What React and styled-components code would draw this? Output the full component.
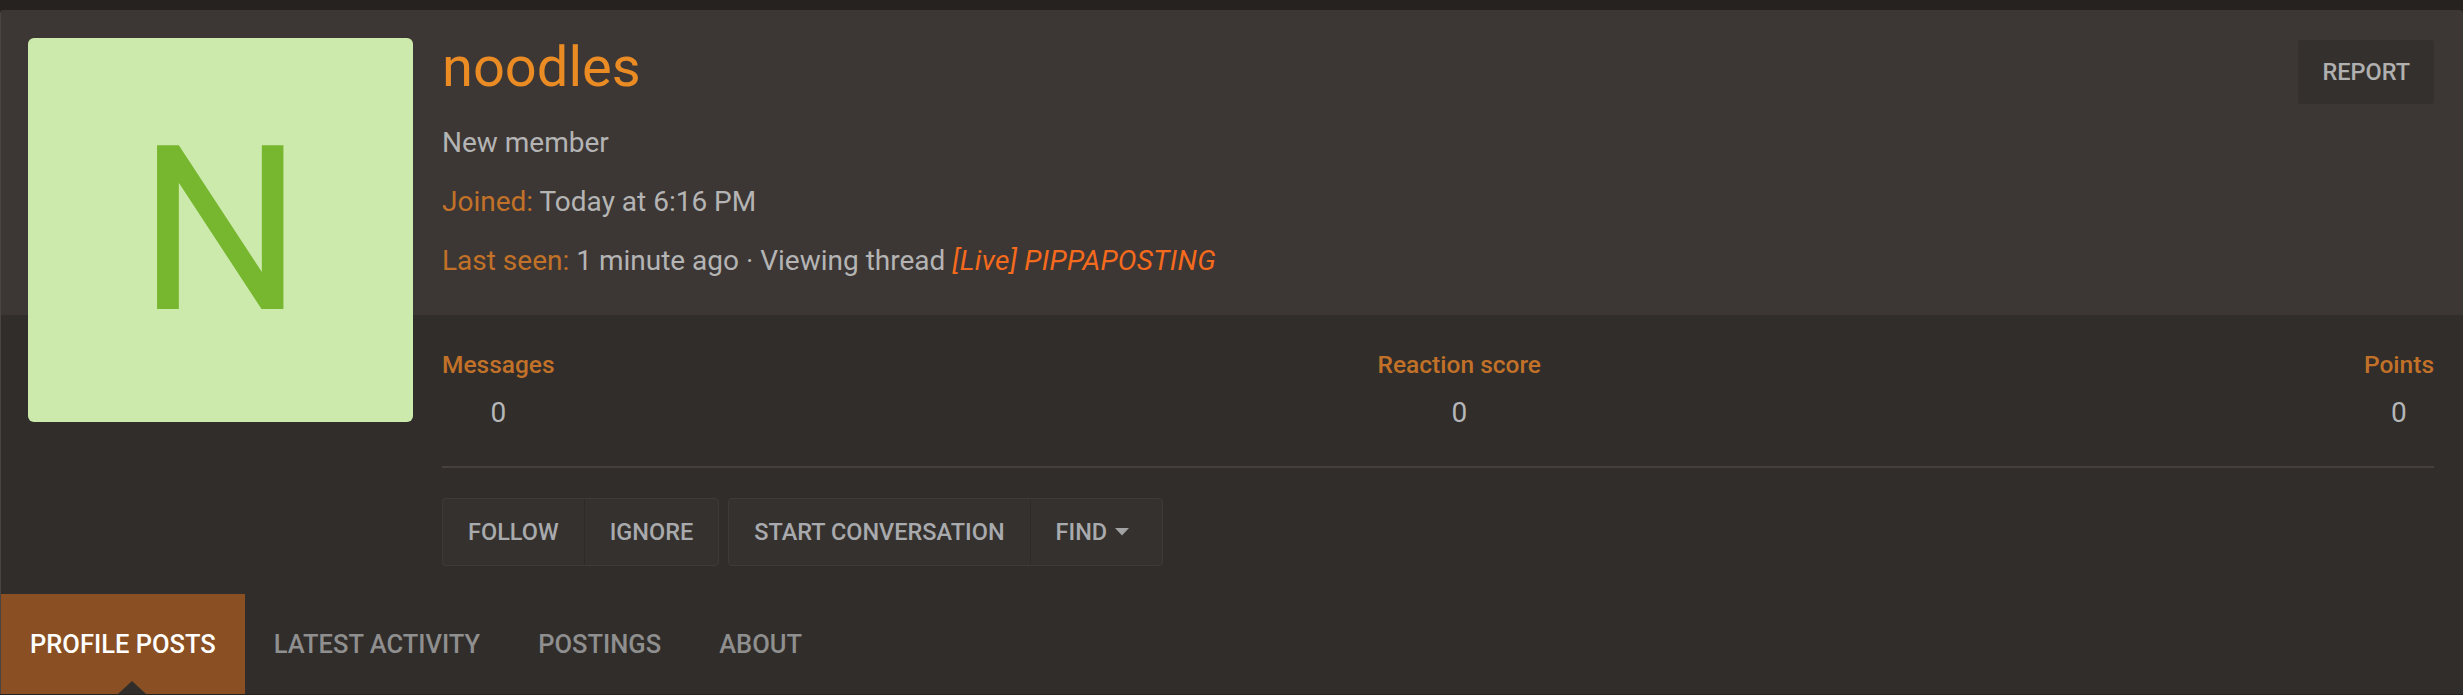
import styled, { createGlobalStyle } from 'styled-components'

const GlobalStyle = createGlobalStyle`
    html, body {
        margin: 0;
        padding: 0;
        background: #262220;
        font-family: Roboto, 'Liberation Sans', sans-serif;
    }
`

const stats = [
    { label: 'Messages', value: '0' },
    { label: 'Reaction score', value: '0' },
    { label: 'Points', value: '0' },
]

const tabs = ['Profile posts', 'Latest activity', 'Postings', 'About']

const Caret = () => (
    <svg width="14" height="8" viewBox="0 0 14 8">
        <path d="M0 0 L14 0 L7 7.5 Z" fill="#a3a3a3" />
    </svg>
)

const App = () => {
    return (
        <S.Page>
            <GlobalStyle />
            <S.Card>
                <S.Avatar>
                    <span>N</span>
                </S.Avatar>

                <S.Header>
                    <S.Info>
                        <S.Name>noodles</S.Name>
                        <S.Line>New member</S.Line>
                        <S.Line>
                            <S.Key>Joined:</S.Key> Today at 6:16 PM
                        </S.Line>
                        <S.Line>
                            <S.Key>Last seen:</S.Key> 1 minute ago · Viewing thread{' '}
                            <S.Thread>[Live] PIPPAPOSTING</S.Thread>
                        </S.Line>
                    </S.Info>
                    <S.Report>Report</S.Report>
                </S.Header>

                <S.Body>
                    <S.Stats>
                        {stats.map(s => (
                            <S.Stat key={s.label}>
                                <dt>{s.label}</dt>
                                <dd>{s.value}</dd>
                            </S.Stat>
                        ))}
                    </S.Stats>
                    <S.Divider />
                    <S.Actions>
                        <S.Group>
                            <S.Button>Follow</S.Button>
                            <S.Button>Ignore</S.Button>
                        </S.Group>
                        <S.Group>
                            <S.Button>Start conversation</S.Button>
                            <S.Button menu={1}>
                                Find <Caret />
                            </S.Button>
                        </S.Group>
                    </S.Actions>
                </S.Body>

                <S.Tabs>
                    {tabs.map((t, i) => (
                        <S.Tab key={t} active={i === 0 ? 1 : 0}>
                            {t}
                        </S.Tab>
                    ))}
                </S.Tabs>
            </S.Card>
        </S.Page>
    )
}

export default App

const S = {}

S.Page = styled.div`
    padding-top: 10px;
`

S.Card = styled.div`
    position: relative;
    background: #312d2a;
    border-left: 1px solid #4a4542;
    border-radius: 4px 4px 0 0;
    overflow: hidden;
`

S.Avatar = styled.div`
    position: absolute;
    left: 27px;
    top: 28px;
    width: 385px;
    height: 384px;
    border-radius: 6px;
    background: #cdeaad;
    display: flex;
    align-items: center;
    justify-content: center;
    span {
        color: #76b72f;
        font-size: 231px;
        line-height: 1;
        font-family: Roboto, 'Liberation Sans', sans-serif;
    }
`

S.Header = styled.div`
    background: #3c3734;
    display: flex;
    align-items: flex-start;
    padding: 24px 29px 0 441px;
    height: 305px;
    box-sizing: border-box;
`

S.Info = styled.div`
    flex: 1;
`

S.Name = styled.h1`
    margin: 0 0 21px;
    font-size: 56px;
    font-weight: 400;
    line-height: 1.2;
    color: #ea8b24;
`

S.Line = styled.div`
    font-size: 28px;
    line-height: 42px;
    color: #b4b4b4;
    & + & {
        margin-top: 17px;
    }
`

S.Key = styled.span`
    color: #c27128;
`

S.Thread = styled.span`
    color: #f56a1c;
    font-style: italic;
    letter-spacing: 0.3px;
`

S.Report = styled.button`
    margin-top: 6px;
    height: 64px;
    padding: 0 24px;
    border: none;
    border-radius: 3px;
    background: #34302d;
    color: #b0b0b0;
    font-family: Roboto, 'Liberation Sans', sans-serif;
    font-size: 23.5px;
    font-weight: 500;
    text-transform: uppercase;
`

S.Body = styled.div`
    padding: 34px 29px 28px 441px;
`

S.Stats = styled.dl`
    margin: 0;
    display: flex;
    justify-content: space-between;
`

S.Stat = styled.div`
    display: flex;
    flex-direction: column;
    align-items: center;
    dt {
        font-size: 24.5px;
        font-weight: 500;
        line-height: 32px;
        color: #c27128;
    }
    dd {
        margin: 12px 0 0;
        font-size: 28px;
        line-height: 39px;
        color: #b4b6b8;
    }
`

S.Divider = styled.div`
    height: 2px;
    background: #45403d;
    margin-top: 34px;
`

S.Actions = styled.div`
    display: flex;
    gap: 9px;
    margin-top: 30px;
`

S.Group = styled.div`
    display: flex;
    border: 1px solid #3e3a37;
    border-radius: 4px;
    background: #35312e;
    overflow: hidden;
`

S.Button = styled.div`
    height: 66px;
    display: flex;
    align-items: center;
    gap: 8px;
    padding: 0 ${p => (p.menu ? '33px' : '25px')} 0 25px;
    font-size: 23.5px;
    font-weight: 500;
    color: #a8aaad;
    text-transform: uppercase;
    & + & {
        border-left: 1px solid #2e2a27;
    }
`

S.Tabs = styled.div`
    display: flex;
`

S.Tab = styled.div`
    position: relative;
    height: 100px;
    display: flex;
    align-items: center;
    padding: 0 29px;
    font-size: 25.5px;
    font-weight: 500;
    text-transform: uppercase;
    color: ${p => (p.active ? '#ffffff' : '#8f8f8f')};
    background: ${p => (p.active ? '#8a4f22' : 'transparent')};
    ${p =>
        p.active &&
        `
        &::after {
            content: '';
            position: absolute;
            bottom: 0;
            left: 50%;
            margin-left: -5px;
            border: 14px solid transparent;
            border-top: none;
            border-bottom: 13px solid #312d2a;
        }
    `}
`
